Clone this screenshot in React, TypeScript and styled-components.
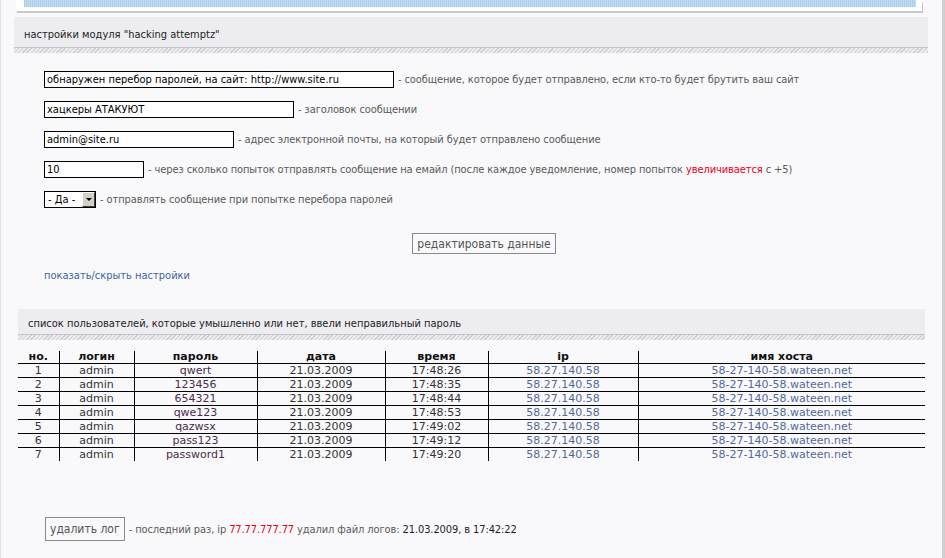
import React from 'react';
import styled, { createGlobalStyle } from 'styled-components';

const GlobalStyle = createGlobalStyle`
  html, body {
    margin: 0;
    padding: 0;
    background: #f9f9fb;
  }
  body {
    font-family: "DejaVu Sans Condensed", "DejaVu Sans", sans-serif;
    font-size: 11px;
    color: #555;
  }
`;

const Page = styled.div`
  position: relative;
  width: 945px;
  height: 558px;
  box-sizing: border-box;
  border-left: 1px solid #e4e0ea;
  border-right: 3px solid #cfcfcf;
  overflow: hidden;
`;

const TopBox = styled.div`
  margin: 0 20px 0 15px;
  height: 11px;
  background: #fff;
  box-shadow: 1px 2px 0 #c9c9c9;
  padding: 0 6px 0 8px;
`;

const BlueStrip = styled.div`
  height: 7px;
  background: repeating-linear-gradient(90deg, #a9cdea 0 1px, #c3ddf1 1px 2px);
`;

const Band = styled.div<{ $left: number; $right: number; $top: number; $h: number }>`
  margin: ${(p) => p.$top}px ${(p) => p.$right}px 0 ${(p) => p.$left}px;
  height: ${(p) => p.$h}px;
  box-sizing: border-box;
  background: #ededf1;
  display: flex;
  align-items: center;
  padding: 4px 0 0 10px;
  color: #222;
  border-bottom: 1px solid #c4c4c8;
  position: relative;
  &::after {
    content: '';
    position: absolute;
    left: 0;
    right: 0;
    top: 100%;
    margin-top: 1px;
    height: 5px;
    background: repeating-linear-gradient(135deg, #cfcfd3 0 1px, #ebebef 1px 3px);
  }
`;

const Form = styled.div`
  padding: 16px 18px 0 43px;
`;

const Row = styled.div`
  height: 30px;
  display: flex;
  align-items: center;
  gap: 4px;
  white-space: nowrap;
`;

const TextInput = styled.input<{ $w: number }>`
  width: ${(p) => p.$w}px;
  height: 17px;
  box-sizing: border-box;
  border: 1px solid #000;
  background: #fff;
  padding: 0 2px;
  margin: 0;
  font-family: "DejaVu Sans Condensed", "DejaVu Sans", sans-serif;
  font-size: 11px;
  color: #000;
  outline: none;
`;

const SelectBox = styled.div`
  width: 52px;
  height: 17px;
  box-sizing: border-box;
  border: 1px solid #000;
  background: #fff;
  display: flex;
  align-items: stretch;
  color: #000;
  font-size: 11px;
`;

const SelectText = styled.span`
  flex: 1;
  display: flex;
  align-items: center;
  padding-left: 3px;
`;

const SelectArrow = styled.span`
  width: 13px;
  background: #d4d0c8;
  border-top: 1px solid #fff;
  border-left: 1px solid #fff;
  border-right: 1px solid #404040;
  border-bottom: 1px solid #404040;
  box-sizing: border-box;
  display: flex;
  align-items: center;
  justify-content: center;
  &::before {
    content: '';
    border-left: 3px solid transparent;
    border-right: 3px solid transparent;
    border-top: 3px solid #000;
  }
`;

const Label = styled.span`
  color: #5a5a5a;
  letter-spacing: -0.1px;
`;

const Red = styled.span`
  color: #e8001c;
`;

const Dark = styled.span`
  color: #1c1c30;
`;

const ButtonRow = styled.div`
  display: flex;
  justify-content: center;
  padding: 19px 0 0 0;
`;

const GreyButton = styled.button<{ $h: number }>`
  font-family: "DejaVu Sans Condensed", "DejaVu Sans", sans-serif;
  font-size: 12px;
  color: #555;
  background: transparent;
  border: 1px solid #8a8a8a;
  padding: 0 4px;
  height: ${(p) => p.$h}px;
  margin: 0;
  cursor: pointer;
`;

const ToggleLink = styled.a`
  display: block;
  margin-top: 15px;
  color: #4163a3;
  text-decoration: none;
  line-height: 14px;
`;

const Table = styled.table`
  margin: 16px 0 0 17px;
  width: 907px;
  border-collapse: collapse;
  table-layout: fixed;
  font-family: "DejaVu Sans", Verdana, sans-serif;
  font-size: 11px;
`;

const Th = styled.th`
  height: 12px;
  padding: 0;
  line-height: 12px;
  font-weight: bold;
  color: #111;
  text-align: center;
  border-bottom: 1px solid #000;
  & + & {
    border-left: 1px solid #000;
  }
`;

const Tr = styled.tr`
  &:not(:last-child) td {
    border-bottom: 1px solid #000;
  }
`;

const Td = styled.td<{ $color?: string }>`
  height: 13px;
  padding: 0;
  line-height: 13px;
  text-align: center;
  color: ${(p) => p.$color || '#333'};
  & + & {
    border-left: 1px solid #000;
  }
`;

const Footer = styled.div`
  margin: 56px 0 0 44px;
  display: flex;
  align-items: center;
  gap: 4px;
  white-space: nowrap;
`;

const columns = [41, 75, 123, 128, 103, 150, 287];
const headers = ['но.', 'логин', 'пароль', 'дата', 'время', 'ip', 'имя хоста'];

const entries = [
  { pass: 'qwert', time: '17:48:26' },
  { pass: '123456', time: '17:48:35' },
  { pass: '654321', time: '17:48:44' },
  { pass: 'qwe123', time: '17:48:53' },
  { pass: 'qazwsx', time: '17:49:02' },
  { pass: 'pass123', time: '17:49:12' },
  { pass: 'password1', time: '17:49:20' },
];

export default function App() {
  return (
    <>
      <GlobalStyle />
      <Page>
        <TopBox>
          <BlueStrip />
        </TopBox>
        <Band $left={13} $right={14} $top={6} $h={31}>
          настройки модуля "hacking attemptz"
        </Band>
        <Form>
          <Row>
            <TextInput $w={350} defaultValue="обнаружен перебор паролей, на сайт: http://www.site.ru" />
            <Label>- сообщение, которое будет отправлено, если кто-то будет брутить ваш сайт</Label>
          </Row>
          <Row>
            <TextInput $w={250} defaultValue="хацкеры АТАКУЮТ" />
            <Label>- заголовок сообщении</Label>
          </Row>
          <Row>
            <TextInput $w={190} defaultValue="admin@site.ru" />
            <Label>- адрес электронной почты, на который будет отправлено сообщение</Label>
          </Row>
          <Row>
            <TextInput $w={100} defaultValue="10" />
            <Label>
              - через сколько попыток отправлять сообщение на емайл (после каждое уведомление, номер попыток{' '}
              <Red>увеличивается</Red> с +5)
            </Label>
          </Row>
          <Row>
            <SelectBox>
              <SelectText>- Да -</SelectText>
              <SelectArrow />
            </SelectBox>
            <Label>- отправлять сообщение при попытке перебора паролей</Label>
          </Row>
          <ButtonRow>
            <GreyButton $h={21}>редактировать данные</GreyButton>
          </ButtonRow>
          <ToggleLink href="#">показать/скрыть настройки</ToggleLink>
        </Form>
        <Band $left={17} $right={17} $top={26} $h={26}>
          список пользователей, которые умышленно или нет, ввели неправильный пароль
        </Band>
        <Table>
          <colgroup>
            {columns.map((w, i) => (
              <col key={i} style={{ width: w }} />
            ))}
          </colgroup>
          <thead>
            <tr>
              {headers.map((h) => (
                <Th key={h}>{h}</Th>
              ))}
            </tr>
          </thead>
          <tbody>
            {entries.map((e, i) => (
              <Tr key={i}>
                <Td>{i + 1}</Td>
                <Td>admin</Td>
                <Td $color="#4a2c4a">{e.pass}</Td>
                <Td>21.03.2009</Td>
                <Td>{e.time}</Td>
                <Td $color="#54699a">58.27.140.58</Td>
                <Td $color="#54699a">58-27-140-58.wateen.net</Td>
              </Tr>
            ))}
          </tbody>
        </Table>
        <Footer>
          <GreyButton $h={24}>удалить лог</GreyButton>
          <Label>
            - последний раз, ip <Red>77.77.777.77</Red> удалил файл логов: <Dark>21.03.2009, в 17:42:22</Dark>
          </Label>
        </Footer>
      </Page>
    </>
  );
}
